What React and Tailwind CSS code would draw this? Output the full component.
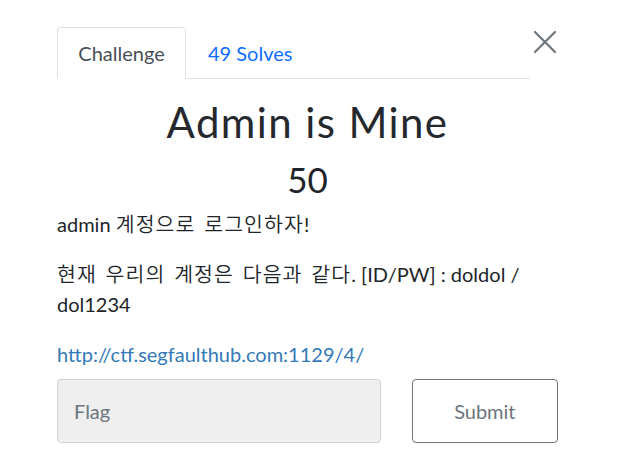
import React from 'react';

// Korean runs: the reference renders hangul a bit wider and lighter than Lato's fallback
const Ko = ({ children }) => (
  <span className="font-['Noto_Sans_CJK_KR',sans-serif] text-[20.5px] leading-[20px] font-[350] tracking-[1.1px] [word-spacing:3px]">
    {children}
  </span>
);

const App = () => {
  return (
    <div className="w-[620px] h-[471px] bg-white overflow-hidden font-['Lato','Noto_Sans_CJK_KR',sans-serif] text-[#212529]">
      <div className="pl-[57px] pr-[62px] pt-[27px]">
        {/* Tabs + close */}
        <div className="flex items-start">
          <div className="flex flex-1 border-b border-[#dee2e6]">
            <div className="h-[52px] w-[129px] -mb-px flex items-center justify-center border border-[#dee2e6] border-b-white rounded-t-[4px] bg-white text-[20px] text-[#495057]">
              Challenge
            </div>
            <div className="h-[51px] px-[22px] flex items-center text-[20px] text-[#0d6efd]">
              49 Solves
            </div>
          </div>
          <button className="ml-[2px] w-[26px] h-[30px] flex items-center justify-center text-[#6c757d]">
            <svg width="24" height="24" viewBox="0 0 24 24" stroke="currentColor" strokeWidth="2.2" strokeLinecap="round">
              <path d="M2 2 L22 22 M22 2 L2 22" />
            </svg>
          </button>
        </div>

        {/* Title */}
        <div className="text-center mt-[18px]">
          <h3 className="text-[42px] leading-[50px] tracking-[1.4px] text-[#25292d]">Admin is Mine</h3>
          <h4 className="text-[35px] leading-[42px] mt-[11px]">50</h4>
        </div>

        {/* Description */}
        <div className="text-[20px] leading-[30px] mt-[9px]">
          <p>admin <Ko>계정으로 로그인하자</Ko>!</p>
          <p className="mt-[20px]"><Ko>현재 우리의 계정은 다음과 같다</Ko>. [ID/PW] : doldol / dol1234</p>
          <p className="mt-[20px]">
            <a href="#" className="text-[#337ab7]">http://ctf.segfaulthub.com:1129/4/</a>
          </p>
        </div>

        {/* Flag form */}
        <div className="flex mt-[10px] gap-[31px]">
          <input
            type="text"
            placeholder="Flag"
            className="w-[325px] h-[64px] px-[16px] bg-[#efefef] border border-[#ced4da] rounded-[4px] text-[20px] placeholder:text-[#6c757d] outline-none"
          />
          <button className="w-[147px] h-[64px] border border-[#6c757d] rounded-[4px] text-[20px] text-[#6c757d] bg-white">
            Submit
          </button>
        </div>
      </div>
    </div>
  );
};

export default App;
